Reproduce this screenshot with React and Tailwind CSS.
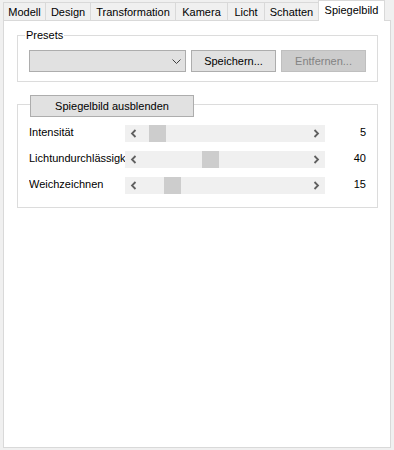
import React from 'react';

const tabs = [
  { name: 'Modell', w: 'w-[42px]' },
  { name: 'Design', w: 'w-[45px]' },
  { name: 'Transformation', w: 'w-[85px]' },
  { name: 'Kamera', w: 'w-[52px]' },
  { name: 'Licht', w: 'w-[37px]' },
  { name: 'Schatten', w: 'w-[54px]' },
];

const sliders = [
  { label: 'Intensität', value: 5 },
  { label: 'Lichtundurchlässigkeit', value: 40 },
  { label: 'Weichzeichnen', value: 15 },
];

function Chevron({ dir }) {
  const pts = dir === 'left' ? '10.5,5 7,8.5 10.5,12' : '6.5,5 10,8.5 6.5,12';
  return (
    <svg width="17" height="17" viewBox="0 0 17 17" className="shrink-0">
      <polyline points={pts} fill="none" stroke="#606060" strokeWidth="1.8" />
    </svg>
  );
}

function ScrollBar({ value }) {
  // track interior 166px, thumb 17px
  const left = Math.round((value / 100) * (166 - 17));
  return (
    <div className="flex h-[17px] w-[200px] bg-[#f0f0f0]">
      <Chevron dir="left" />
      <div className="relative flex-1">
        <div className="absolute top-0 h-[17px] w-[17px] bg-[#cdcdcd]" style={{ left }} />
      </div>
      <Chevron dir="right" />
    </div>
  );
}

export default function App() {
  return (
    <div className="w-[394px] h-[450px] bg-[#f0f0f0] font-['Liberation_Sans',Arial,sans-serif] text-[11px] text-black">
      <div className="flex items-end h-[20px] pl-[3px]">
        {tabs.map((t) => (
          <div
            key={t.name}
            className={`${t.w} h-[18px] border-t border-l border-[#d9d9d9] flex items-center justify-center pt-px`}
          >
            {t.name}
          </div>
        ))}
        <div className="relative z-10 -mb-px w-[67px] h-[21px] bg-white border-t border-l border-r border-[#d9d9d9] flex items-center justify-center pb-px">
          Spiegelbild
        </div>
      </div>

      <div className="ml-[3px] w-[388px] h-[428px] bg-white border border-[#d9d9d9] pt-[14px] pl-[13px]">
        <div className="relative w-[361px] h-[47px] border border-[#dcdcdc] pt-[14px] pl-[11px] flex gap-[5px]">
          <span className="absolute -top-[8px] left-[7px] bg-white px-[1px] leading-[14px]">Presets</span>
          <div className="relative w-[157px] h-[22px] bg-[#e1e1e1] border border-[#adadad]">
            <svg width="10" height="6" viewBox="0 0 10 6" className="absolute left-[142px] top-[8px]">
              <polyline points="0.5,0.5 4.5,4.5 8.5,0.5" fill="none" stroke="#404040" strokeWidth="1" />
            </svg>
          </div>
          <button className="w-[85px] h-[22px] bg-[#e1e1e1] border border-[#adadad] flex items-center justify-center">
            Speichern...
          </button>
          <button className="w-[85px] h-[22px] bg-[#cccccc] border border-[#bfbfbf] text-[#838383] flex items-center justify-center">
            Entfernen...
          </button>
        </div>

        <div className="relative mt-[22px] w-[361px] h-[104px] border border-[#dcdcdc] pt-[20px] pl-[11px] flex flex-col gap-[9px]">
          <button className="absolute -top-[10px] left-[12px] w-[164px] h-[22px] bg-[#e1e1e1] border border-[#adadad] flex items-center justify-center">
            Spiegelbild ausblenden
          </button>
          {sliders.map((s) => (
            <div key={s.label} className="flex items-center h-[17px]">
              <div className="w-[96px] overflow-hidden whitespace-nowrap leading-[17px] -mt-[2px]">{s.label}</div>
              <ScrollBar value={s.value} />
              <div className="w-[41px] text-right -mt-[2px]">{s.value}</div>
            </div>
          ))}
        </div>
      </div>
    </div>
  );
}
